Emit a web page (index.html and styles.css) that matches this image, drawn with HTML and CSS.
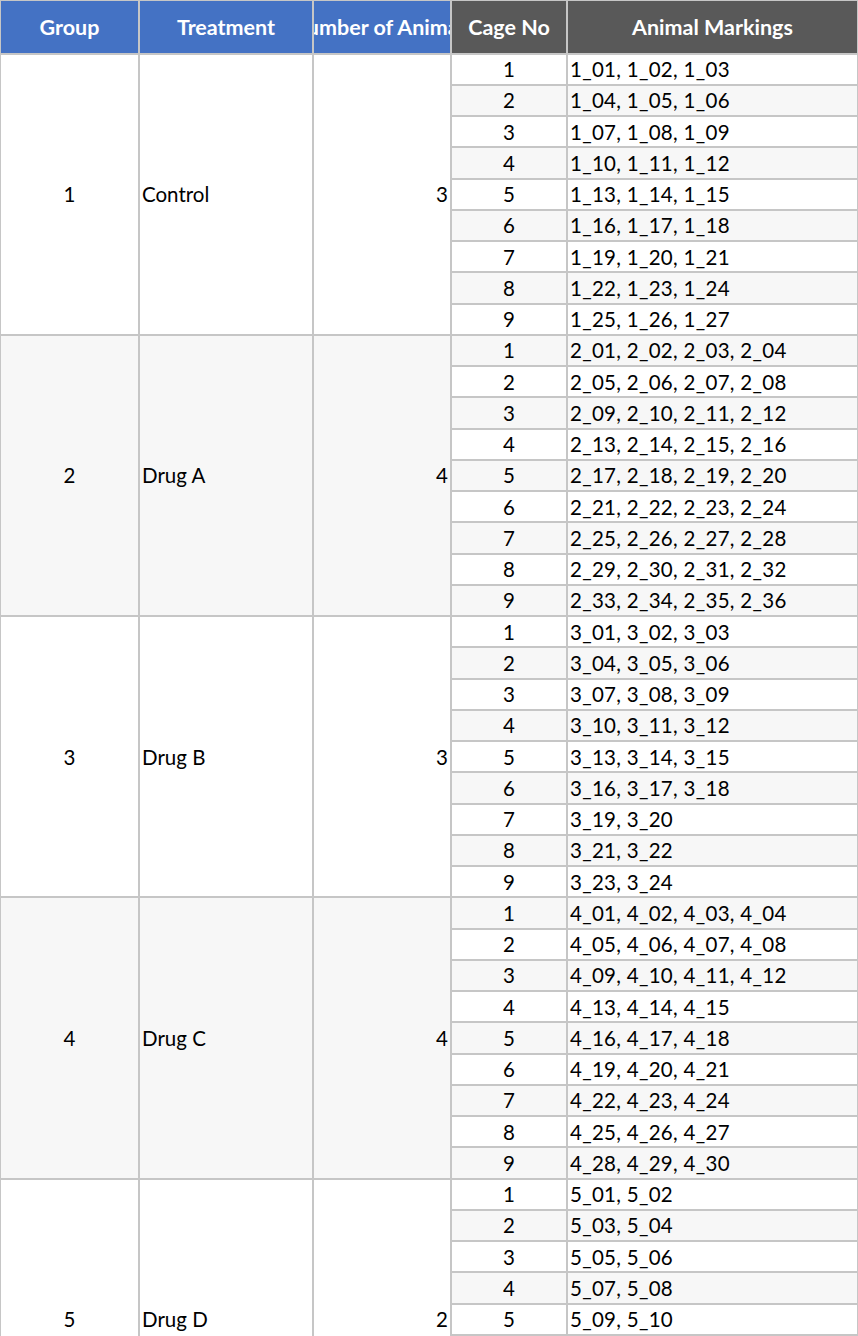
FILE: index.html
```html
<!DOCTYPE html>
<html>
<head>
<meta charset="utf-8">
<link rel="stylesheet" href="styles.css">
</head>
<body>
<div class="sheet">
  <div class="hd blue">Group</div>
  <div class="hd blue">Treatment</div>
  <div class="hd blue">Number of Animals</div>
  <div class="hd dark">Cage No</div>
  <div class="hd dark">Animal Markings</div>

  <div class="c g1 center">1</div>
  <div class="c g2 left">Control</div>
  <div class="c g3 right">3</div>
  <div class="c cage center">1</div><div class="c mark left">1_01, 1_02, 1_03</div>
  <div class="c cage center alt">2</div><div class="c mark left alt">1_04, 1_05, 1_06</div>
  <div class="c cage center">3</div><div class="c mark left">1_07, 1_08, 1_09</div>
  <div class="c cage center alt">4</div><div class="c mark left alt">1_10, 1_11, 1_12</div>
  <div class="c cage center">5</div><div class="c mark left">1_13, 1_14, 1_15</div>
  <div class="c cage center alt">6</div><div class="c mark left alt">1_16, 1_17, 1_18</div>
  <div class="c cage center">7</div><div class="c mark left">1_19, 1_20, 1_21</div>
  <div class="c cage center alt">8</div><div class="c mark left alt">1_22, 1_23, 1_24</div>
  <div class="c cage center">9</div><div class="c mark left">1_25, 1_26, 1_27</div>

  <div class="c g1 center alt">2</div>
  <div class="c g2 left alt">Drug A</div>
  <div class="c g3 right alt">4</div>
  <div class="c cage center alt">1</div><div class="c mark left alt">2_01, 2_02, 2_03, 2_04</div>
  <div class="c cage center">2</div><div class="c mark left">2_05, 2_06, 2_07, 2_08</div>
  <div class="c cage center alt">3</div><div class="c mark left alt">2_09, 2_10, 2_11, 2_12</div>
  <div class="c cage center">4</div><div class="c mark left">2_13, 2_14, 2_15, 2_16</div>
  <div class="c cage center alt">5</div><div class="c mark left alt">2_17, 2_18, 2_19, 2_20</div>
  <div class="c cage center">6</div><div class="c mark left">2_21, 2_22, 2_23, 2_24</div>
  <div class="c cage center alt">7</div><div class="c mark left alt">2_25, 2_26, 2_27, 2_28</div>
  <div class="c cage center">8</div><div class="c mark left">2_29, 2_30, 2_31, 2_32</div>
  <div class="c cage center alt">9</div><div class="c mark left alt">2_33, 2_34, 2_35, 2_36</div>

  <div class="c g1 center">3</div>
  <div class="c g2 left">Drug B</div>
  <div class="c g3 right">3</div>
  <div class="c cage center">1</div><div class="c mark left">3_01, 3_02, 3_03</div>
  <div class="c cage center alt">2</div><div class="c mark left alt">3_04, 3_05, 3_06</div>
  <div class="c cage center">3</div><div class="c mark left">3_07, 3_08, 3_09</div>
  <div class="c cage center alt">4</div><div class="c mark left alt">3_10, 3_11, 3_12</div>
  <div class="c cage center">5</div><div class="c mark left">3_13, 3_14, 3_15</div>
  <div class="c cage center alt">6</div><div class="c mark left alt">3_16, 3_17, 3_18</div>
  <div class="c cage center">7</div><div class="c mark left">3_19, 3_20</div>
  <div class="c cage center alt">8</div><div class="c mark left alt">3_21, 3_22</div>
  <div class="c cage center">9</div><div class="c mark left">3_23, 3_24</div>

  <div class="c g1 center alt">4</div>
  <div class="c g2 left alt">Drug C</div>
  <div class="c g3 right alt">4</div>
  <div class="c cage center alt">1</div><div class="c mark left alt">4_01, 4_02, 4_03, 4_04</div>
  <div class="c cage center">2</div><div class="c mark left">4_05, 4_06, 4_07, 4_08</div>
  <div class="c cage center alt">3</div><div class="c mark left alt">4_09, 4_10, 4_11, 4_12</div>
  <div class="c cage center">4</div><div class="c mark left">4_13, 4_14, 4_15</div>
  <div class="c cage center alt">5</div><div class="c mark left alt">4_16, 4_17, 4_18</div>
  <div class="c cage center">6</div><div class="c mark left">4_19, 4_20, 4_21</div>
  <div class="c cage center alt">7</div><div class="c mark left alt">4_22, 4_23, 4_24</div>
  <div class="c cage center">8</div><div class="c mark left">4_25, 4_26, 4_27</div>
  <div class="c cage center alt">9</div><div class="c mark left alt">4_28, 4_29, 4_30</div>

  <div class="c g1 center">5</div>
  <div class="c g2 left">Drug D</div>
  <div class="c g3 right">2</div>
  <div class="c cage center">1</div><div class="c mark left">5_01, 5_02</div>
  <div class="c cage center alt">2</div><div class="c mark left alt">5_03, 5_04</div>
  <div class="c cage center">3</div><div class="c mark left">5_05, 5_06</div>
  <div class="c cage center alt">4</div><div class="c mark left alt">5_07, 5_08</div>
  <div class="c cage center">5</div><div class="c mark left">5_09, 5_10</div>
  <div class="c cage center alt">6</div><div class="c mark left alt">5_11, 5_12</div>
  <div class="c cage center">7</div><div class="c mark left">5_13, 5_14</div>
  <div class="c cage center alt">8</div><div class="c mark left alt">5_15, 5_16</div>
  <div class="c cage center">9</div><div class="c mark left">5_17, 5_18</div>
</div>
</body>
</html>
```

FILE: styles.css
```css
html, body {
  margin: 0;
  padding: 0;
  background: #ffffff;
}

.sheet {
  width: 858px;
  box-sizing: border-box;
  display: grid;
  grid-template-columns: 137px 172px 136px 114px 289px;
  grid-template-rows: 51.5px repeat(45, 29.25px);
  gap: 2px;
  padding: 1px 1px 1px 1px;
  background: #c6c6c6;
  font-family: Lato, "Noto Sans", sans-serif;
  font-size: 20.5px;
  color: #000000;
}

.hd {
  display: flex;
  align-items: center;
  justify-content: center;
  overflow: hidden;
  white-space: nowrap;
  color: #ffffff;
  font-weight: 700;
  font-size: 21.5px;
}

.blue { background: #4472c4; }
.dark { background: #595959; }

.c {
  display: flex;
  align-items: center;
  overflow: hidden;
  white-space: nowrap;
  background: #ffffff;
  padding: 0 2px;
}

.c.alt { background: #f7f7f7; }

.center { justify-content: center; }
.left { justify-content: flex-start; }
.right { justify-content: flex-end; }

.g1 { grid-column: 1; grid-row: span 9; }
.g2 { grid-column: 2; grid-row: span 9; }
.g3 { grid-column: 3; grid-row: span 9; }
.cage { grid-column: 4; }
.mark { grid-column: 5; letter-spacing: 0.3px; }
```
